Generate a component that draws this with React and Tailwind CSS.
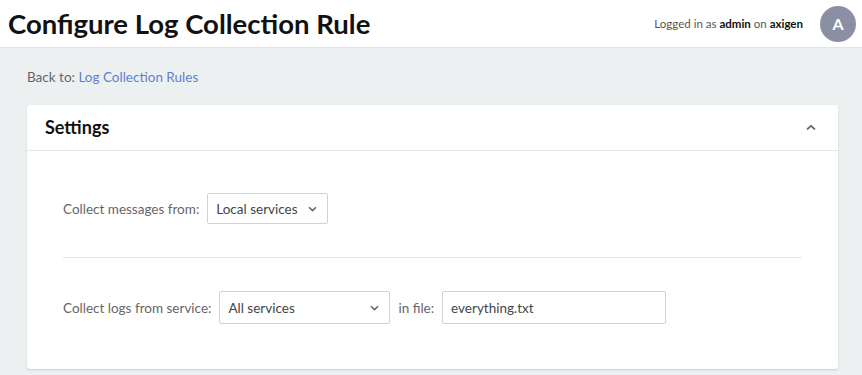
import React from "react";

const F = { fontFamily: "Lato, 'Liberation Sans', sans-serif" };

export default function App() {
  return (
    <div className="min-h-[375px] bg-[#edf0f1] text-[#333]" style={F}>
      <header className="flex h-[48px] items-center justify-between border-b border-[#e3e6e8] bg-white pl-[8px] pr-[6px]">
        <h1 className="text-[27.5px] font-bold leading-none text-[#111]">Configure Log Collection Rule</h1>
        <div className="flex items-center gap-[17px]">
          <span className="text-[11.5px] text-[#555]">
            Logged in as <b className="text-[#111]">admin</b> on <b className="text-[#111]">axigen</b>
          </span>
          <div className="flex h-[36px] w-[36px] items-center justify-center rounded-full bg-[#8b8fa3] text-[16px] font-bold text-white">A</div>
        </div>
      </header>
      <div className="pl-[27px] pr-[24px] pt-[19px]">
        <div className="text-[13.5px] text-[#666]">
          Back to: <a className="text-[#5f7fd6]">Log Collection Rules</a>
        </div>
        <div className="mt-[18px] rounded-[3px] bg-white shadow-[0_1px_2px_rgba(0,0,0,0.15)]">
          <div className="flex h-[46px] items-center justify-between border-b border-[#e5e7e9] pl-[18px] pr-[22px]">
            <span className="text-[18px] font-bold text-[#111]">Settings</span>
            <svg width="10" height="7" viewBox="0 0 10 7" className="text-[#6b7378]">
              <path d="M1 5.5 L5 1.8 L9 5.5" fill="none" stroke="currentColor" strokeWidth="1.8" />
            </svg>
          </div>
          <div className="px-[36px] pb-[45px] pt-[42px]">
            <div className="flex items-center gap-[8px] text-[13.5px] text-[#666]">
              <span>Collect messages from:</span>
              <div className="flex h-[31px] w-[121px] items-center justify-between rounded-[2px] border border-[#cfd3d6] pl-[8px] pr-[10px] text-[#444]">
                <span>Local services</span>
                <svg width="9" height="6" viewBox="0 0 9 6"><path d="M1 1.2 L4.5 4.6 L8 1.2" fill="none" stroke="#666" strokeWidth="1.6" /></svg>
              </div>
            </div>
            <div className="my-[33px] border-t border-[#e3e6e8]"></div>
            <div className="flex items-center gap-[8px] text-[13.5px] text-[#666]">
              <span>Collect logs from service:</span>
              <div className="flex h-[33px] w-[171px] items-center justify-between rounded-[2px] border border-[#cfd3d6] pl-[8px] pr-[10px] text-[#444]">
                <span>All services</span>
                <svg width="9" height="6" viewBox="0 0 9 6"><path d="M1 1.2 L4.5 4.6 L8 1.2" fill="none" stroke="#666" strokeWidth="1.6" /></svg>
              </div>
              <span>in file:</span>
              <div className="flex h-[33px] w-[224px] items-center rounded-[2px] border border-[#cfd3d6] pl-[8px] text-[#444]">everything.txt</div>
            </div>
          </div>
        </div>
      </div>
    </div>
  );
}
